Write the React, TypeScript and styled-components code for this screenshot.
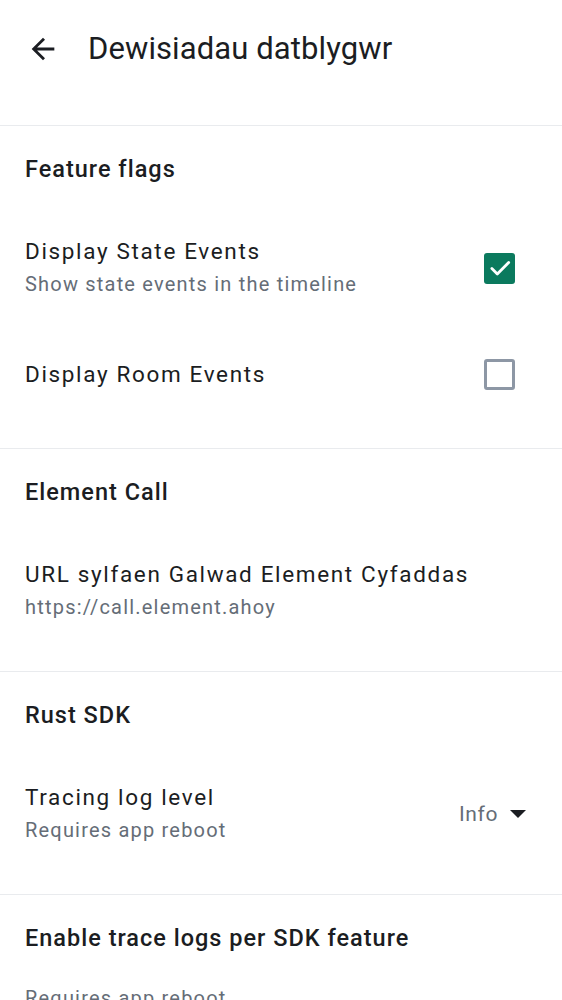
import React from "react";
import styled, { createGlobalStyle } from "styled-components";

const Global = createGlobalStyle`
  html, body { margin: 0; padding: 0; background: #ffffff; }
  body { font-family: Roboto, "Noto Sans", sans-serif; color: #1b1d22; -webkit-font-smoothing: antialiased; }
  * { box-sizing: border-box; }
`;

const Page = styled.div`
  width: 562px;
  height: 1000px;
  overflow: hidden;
  background: #fff;
`;

const TopBar = styled.header`
  height: 125px;
  display: flex;
  align-items: flex-start;
  padding: 32px 0 0 26px;
`;

const BackButton = styled.div`
  width: 34px;
  height: 34px;
  display: flex;
  align-items: center;
  justify-content: center;
  color: #1b1d22;
`;

const Title = styled.h1`
  margin: 0 0 0 28px;
  font-size: 31px;
  font-weight: 400;
  line-height: 34px;
  letter-spacing: 0.1px;
  color: #1b1d22;
`;

const Section = styled.section`
  border-top: 1px solid #e9ebee;
  padding-bottom: 24px;
`;

const SectionHeader = styled.h2`
  margin: 0;
  height: 86px;
  display: flex;
  align-items: center;
  padding: 0 25px;
  font-size: 23.5px;
  font-weight: 500;
  letter-spacing: 1px;
  color: #1b1d22;
`;

const Row = styled.div<{ $h: number; $top?: boolean }>`
  height: ${(p) => p.$h}px;
  display: flex;
  align-items: ${(p) => (p.$top ? "flex-start" : "center")};
  padding: 0 25px;
  gap: 16px;
`;

const Texts = styled.div`
  flex: 1;
  display: flex;
  flex-direction: column;
`;

const ItemTitle = styled.div`
  font-size: 22.5px;
  line-height: 32px;
  letter-spacing: 1.65px;
  color: #1b1d22;
`;

const ItemSub = styled.div`
  font-size: 20px;
  line-height: 34px;
  letter-spacing: 1.2px;
  color: #656d77;
`;

const Box = styled.div<{ $checked: boolean }>`
  width: 31px;
  height: 31px;
  margin-right: 22px;
  border-radius: 3px;
  display: flex;
  align-items: center;
  justify-content: center;
  background: ${(p) => (p.$checked ? "#0b7a5e" : "transparent")};
  border: ${(p) => (p.$checked ? "none" : "3px solid #8d97a5")};
`;

const Dropdown = styled.div`
  display: flex;
  align-items: center;
  gap: 12px;
  margin-right: 11px;
  font-size: 21px;
  letter-spacing: 0.6px;
  color: #656d77;
`;

const Arrow = () => (
  <svg width="34" height="34" viewBox="0 0 24 24">
    <path d="M20 11H7.83l5.59-5.59L12 4l-8 8 8 8 1.41-1.41L7.83 13H20v-2z" fill="currentColor" />
  </svg>
);

const Check = () => (
  <svg width="26" height="26" viewBox="0 0 24 24">
    <path d="M4.5 12.5l5 5L20 7" stroke="#fff" strokeWidth="2.6" fill="none" strokeLinecap="round" strokeLinejoin="round" />
  </svg>
);

const Caret = () => (
  <svg width="16" height="10" viewBox="0 0 16 10">
    <path d="M0 1h16L8 9z" fill="#1b1d22" />
  </svg>
);

export default function App() {
  return (
    <Page>
      <Global />
      <TopBar>
        <BackButton>
          <Arrow />
        </BackButton>
        <Title>Dewisiadau datblygwr</Title>
      </TopBar>

      <Section>
        <SectionHeader>Feature flags</SectionHeader>
        <Row $h={112}>
          <Texts>
            <ItemTitle>Display State Events</ItemTitle>
            <ItemSub>Show state events in the timeline</ItemSub>
          </Texts>
          <Box $checked>
            <Check />
          </Box>
        </Row>
        <Row $h={100}>
          <Texts>
            <ItemTitle>Display Room Events</ItemTitle>
          </Texts>
          <Box $checked={false} />
        </Row>
      </Section>

      <Section>
        <SectionHeader>Element Call</SectionHeader>
        <Row $h={112}>
          <Texts>
            <ItemTitle>URL sylfaen Galwad Element Cyfaddas</ItemTitle>
            <ItemSub>https://call.element.ahoy</ItemSub>
          </Texts>
        </Row>
      </Section>

      <Section>
        <SectionHeader>Rust SDK</SectionHeader>
        <Row $h={112}>
          <Texts>
            <ItemTitle>Tracing log level</ItemTitle>
            <ItemSub>Requires app reboot</ItemSub>
          </Texts>
          <Dropdown>
            Info
            <Caret />
          </Dropdown>
        </Row>
      </Section>

      <Section>
        <SectionHeader>Enable trace logs per SDK feature</SectionHeader>
        <Row $h={112} $top>
          <Texts>
            <ItemSub>Requires app reboot</ItemSub>
          </Texts>
        </Row>
      </Section>
    </Page>
  );
}
